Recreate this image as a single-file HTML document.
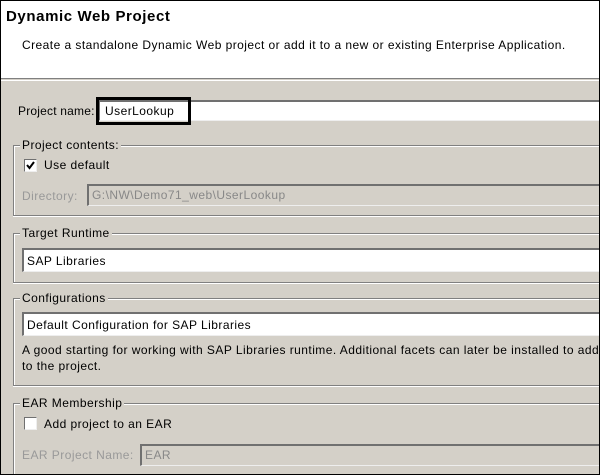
<!DOCTYPE html>
<html style="overflow:hidden;width:600px;height:475px"><head><style>
*{margin:0;padding:0;box-sizing:border-box}
body{width:600px;height:475px;overflow:hidden;background:#d4d0c8;font-family:"Liberation Sans",sans-serif;font-size:12px;letter-spacing:0.45px;color:#000;position:relative}
.frame{position:absolute;left:0;top:0;width:600px;height:475px;border:1px solid #000;pointer-events:none;z-index:10}
.a{position:absolute;white-space:nowrap}
.hdr{position:absolute;left:0;top:0;width:600px;height:79px;background:#fff;border-bottom:1px solid #808080}
.hdr2{position:absolute;left:0;top:80px;width:600px;height:1px;background:#fff}
.grp{position:absolute;left:13px;width:587px;border:1px solid #808080;border-right:none;box-shadow:inset 1px 1px 0 #fff,0 1px 0 #fff}
.leg{position:absolute;background:#d4d0c8;padding:0 2px;line-height:14px}
.field{position:absolute;background:#fff;border-top:2px solid #707070;border-left:2px solid #707070;border-bottom:1px solid #eee;line-height:18px;padding-left:3px;overflow:hidden}
.dis{background:#d4d0c8;color:#888}
.cb{position:absolute;width:13px;height:13px;background:#fff;border:1px solid #707070;border-right-color:#eee;border-bottom-color:#eee}
</style></head><body>
<div class="hdr"></div><div class="hdr2"></div>
<div class="a" style="left:6px;top:8px;font-size:15px;font-weight:bold;letter-spacing:0.6px">Dynamic Web Project</div>
<div class="a" style="left:22px;top:38px">Create a standalone Dynamic Web project or add it to a new or existing Enterprise Application.</div>

<div class="a" style="left:18px;top:104px;letter-spacing:0.2px">Project name:</div>
<div class="field" style="left:98px;top:100px;width:502px;height:21px;padding-left:5px">UserLookup</div>
<div class="a" style="left:96px;top:97px;width:95px;height:28px;border:3px solid #000"></div>

<div class="grp" style="top:145px;height:71px"></div>
<div class="leg" style="left:20px;top:138px">Project contents:</div>
<div class="cb" style="left:24px;top:159px"><svg width="11" height="11" style="position:absolute;left:0;top:0"><path d="M2 5 L4.5 8 L9 2" stroke="#000" stroke-width="2" fill="none"/></svg></div>
<div class="a" style="left:44px;top:158px">Use default</div>
<div class="a" style="left:22px;top:189px;color:#999">Directory:</div>
<div class="field dis" style="left:87px;top:184px;width:513px;height:22px">G:\NW\Demo71_web\UserLookup</div>

<div class="grp" style="top:233px;height:50px"></div>
<div class="leg" style="left:20px;top:226px">Target Runtime</div>
<div class="field" style="left:22px;top:248px;width:578px;height:24px;line-height:22px">SAP Libraries</div>

<div class="grp" style="top:298px;height:88px"></div>
<div class="leg" style="left:20px;top:291px">Configurations</div>
<div class="field" style="left:22px;top:312px;width:578px;height:24px;line-height:22px">Default Configuration for SAP Libraries</div>
<div class="a" style="left:22px;top:343px">A good starting for working with SAP Libraries runtime. Additional facets can later be installed to add</div>
<div class="a" style="left:22px;top:359px">to the project.</div>

<div class="grp" style="top:403px;height:80px"></div>
<div class="leg" style="left:20px;top:396px">EAR Membership</div>
<div class="cb" style="left:24px;top:417px"></div>
<div class="a" style="left:44px;top:417px">Add project to an EAR</div>
<div class="a" style="left:22px;top:448px;color:#999">EAR Project Name:</div>
<div class="field dis" style="left:140px;top:444px;width:460px;height:22px">EAR</div>
<div class="frame"></div>
</body></html>
